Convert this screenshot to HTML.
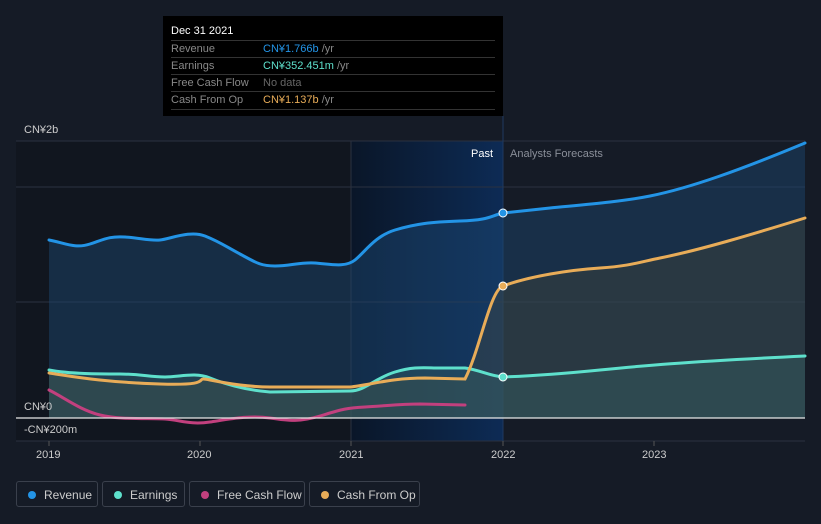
<!DOCTYPE html><html><head><style>
body{margin:0;background:#151b26;width:821px;height:524px;overflow:hidden;font-family:"Liberation Sans",sans-serif;}
.tt{position:absolute;left:163px;top:16px;width:340px;height:100px;background:#000;}
.tt .h{position:absolute;left:8px;top:9px;color:#fff;font-size:11px}
.row{position:absolute;left:8px;width:324px;height:17px;border-top:1px solid #333;font-size:11px;color:#888;line-height:16px}
.row span{position:absolute;left:92px}
.lg{position:absolute;top:481px;height:26px;border:1px solid #3a404c;border-radius:3px;color:#ccc;font-size:12px;line-height:26px;box-sizing:border-box}
.lg i{position:absolute;left:11px;top:9px;width:8px;height:8px;border-radius:50%}
.lg b{font-weight:normal;position:absolute;left:27px;top:0}
</style></head><body>
<svg width="821" height="524" style="position:absolute;left:0;top:0">
<defs><linearGradient id="g" x1="0" x2="1"><stop offset="0" stop-color="#0a1628"/><stop offset="1" stop-color="#0d2b55"/></linearGradient></defs>
<rect x="16" y="141" width="335" height="300" fill="#11161f"/>
<rect x="351" y="141" width="152" height="300" fill="url(#g)"/>
<g stroke="#2a3140" stroke-width="1"><line x1="16" y1="141" x2="805" y2="141"/><line x1="16" y1="187" x2="805" y2="187"/><line x1="16" y1="302" x2="805" y2="302"/><line x1="16" y1="441" x2="805" y2="441"/><line x1="351" y1="141" x2="351" y2="441"/><line x1="503" y1="116" x2="503" y2="441" stroke="#1e3a60"/></g>
<path d="M49,240 C65,243 75,249 90,244 S110,236 125,237 S150,241 160,240 S190,230 205,236 S225,246 240,254 S260,266 275,266 S300,262 315,263 S345,268 355,260 S375,236 395,230 S430,222 460,221 S490,216 503,213 L550,208 C580,205 620,202 650,196 C690,188 740,170 805,143 L805,418 L49,418Z" fill="#1c4a73" opacity=".45"/>
<path d="M49,373 C70,376 100,382 160,384 S190,376 210,380 S250,387 270,387 L350,387 C370,385 390,378 425,378 L465,379 C480,350 490,290 503,286 C530,276 570,270 600,268 S640,262 660,258 C700,250 750,235 805,218 L805,418 L49,418Z" fill="#4a4a3a" opacity=".35"/>
<path d="M49,370 C70,374 100,374 120,374 S150,377 165,377 S195,372 210,378 S245,390 270,392 L350,391 C365,391 375,378 395,372 S425,368 440,368 L465,368 C480,370 490,376 503,377 C530,376 560,374 600,370 C640,366 680,362 805,356 L805,418 L49,418Z" fill="#3a6a6a" opacity=".35"/>
<g fill="none" stroke-width="3" stroke-linecap="round">
<path d="M49,240 C65,243 75,249 90,244 S110,236 125,237 S150,241 160,240 S190,230 205,236 S225,246 240,254 S260,266 275,266 S300,262 315,263 S345,268 355,260 S375,236 395,230 S430,222 460,221 S490,216 503,213 L550,208 C580,205 620,202 650,196 C690,188 740,170 805,143" stroke="#2394e6"/>
<path d="M49,370 C70,374 100,374 120,374 S150,377 165,377 S195,372 210,378 S245,390 270,392 L350,391 C365,391 375,378 395,372 S425,368 440,368 L465,368 C480,370 490,376 503,377 C530,376 560,374 600,370 C640,366 680,362 805,356" stroke="#5ee0cc"/>
<path d="M49,390 C65,398 80,410 100,415 S150,418 165,419 S190,425 210,422 S250,415 270,418 S300,422 320,416 S345,408 365,407 S400,404 420,404 L465,405" stroke="#c2407e"/>
<path d="M49,373 C70,376 100,382 160,384 S190,376 210,380 S250,387 270,387 L350,387 C370,385 390,378 425,378 L465,379 C480,350 490,290 503,286 C530,276 570,270 600,268 S640,262 660,258 C700,250 750,235 805,218" stroke="#e8ac58"/>
</g>
<line x1="16" y1="418" x2="805" y2="418" stroke="#e8e8e8" stroke-width="1.2"/>
<circle cx="503" cy="213" r="4" fill="#2394e6" stroke="#fff"/><circle cx="503" cy="286" r="4" fill="#e8ac58" stroke="#fff"/><circle cx="503" cy="377" r="4" fill="#5ee0cc" stroke="#fff"/>
<g fill="#ccc" font-size="11" font-family="Liberation Sans"><text x="24" y="133">CN¥2b</text><text x="24" y="410">CN¥0</text><text x="24" y="433">-CN¥200m</text>
<text x="36" y="458">2019</text><text x="187" y="458">2020</text><text x="339" y="458">2021</text><text x="491" y="458">2022</text><text x="642" y="458">2023</text>
<text x="471" y="157" fill="#fff">Past</text><text x="510" y="157" fill="#8a8f99">Analysts Forecasts</text></g>
<g stroke="#555"><line x1="49" y1="441" x2="49" y2="446"/><line x1="200" y1="441" x2="200" y2="446"/><line x1="351" y1="441" x2="351" y2="446"/><line x1="503" y1="441" x2="503" y2="446"/><line x1="654" y1="441" x2="654" y2="446"/></g>
</svg>
<div class="tt"><div class="h">Dec 31 2021</div>
<div class="row" style="top:24px">Revenue<span><em style="color:#2394e6;font-style:normal">CN¥1.766b</em> /yr</span></div>
<div class="row" style="top:41px">Earnings<span><em style="color:#5ee0cc;font-style:normal">CN¥352.451m</em> /yr</span></div>
<div class="row" style="top:58px">Free Cash Flow<span style="color:#666">No data</span></div>
<div class="row" style="top:75px;border-bottom:1px solid #333">Cash From Op<span><em style="color:#e8ac58;font-style:normal">CN¥1.137b</em> /yr</span></div></div>
<div class="lg" style="left:16px;width:82px"><i style="background:#2394e6"></i><b>Revenue</b></div>
<div class="lg" style="left:102px;width:83px"><i style="background:#5ee0cc"></i><b>Earnings</b></div>
<div class="lg" style="left:189px;width:116px"><i style="background:#c2407e"></i><b>Free Cash Flow</b></div>
<div class="lg" style="left:309px;width:111px"><i style="background:#e8ac58"></i><b>Cash From Op</b></div>
</body></html>
